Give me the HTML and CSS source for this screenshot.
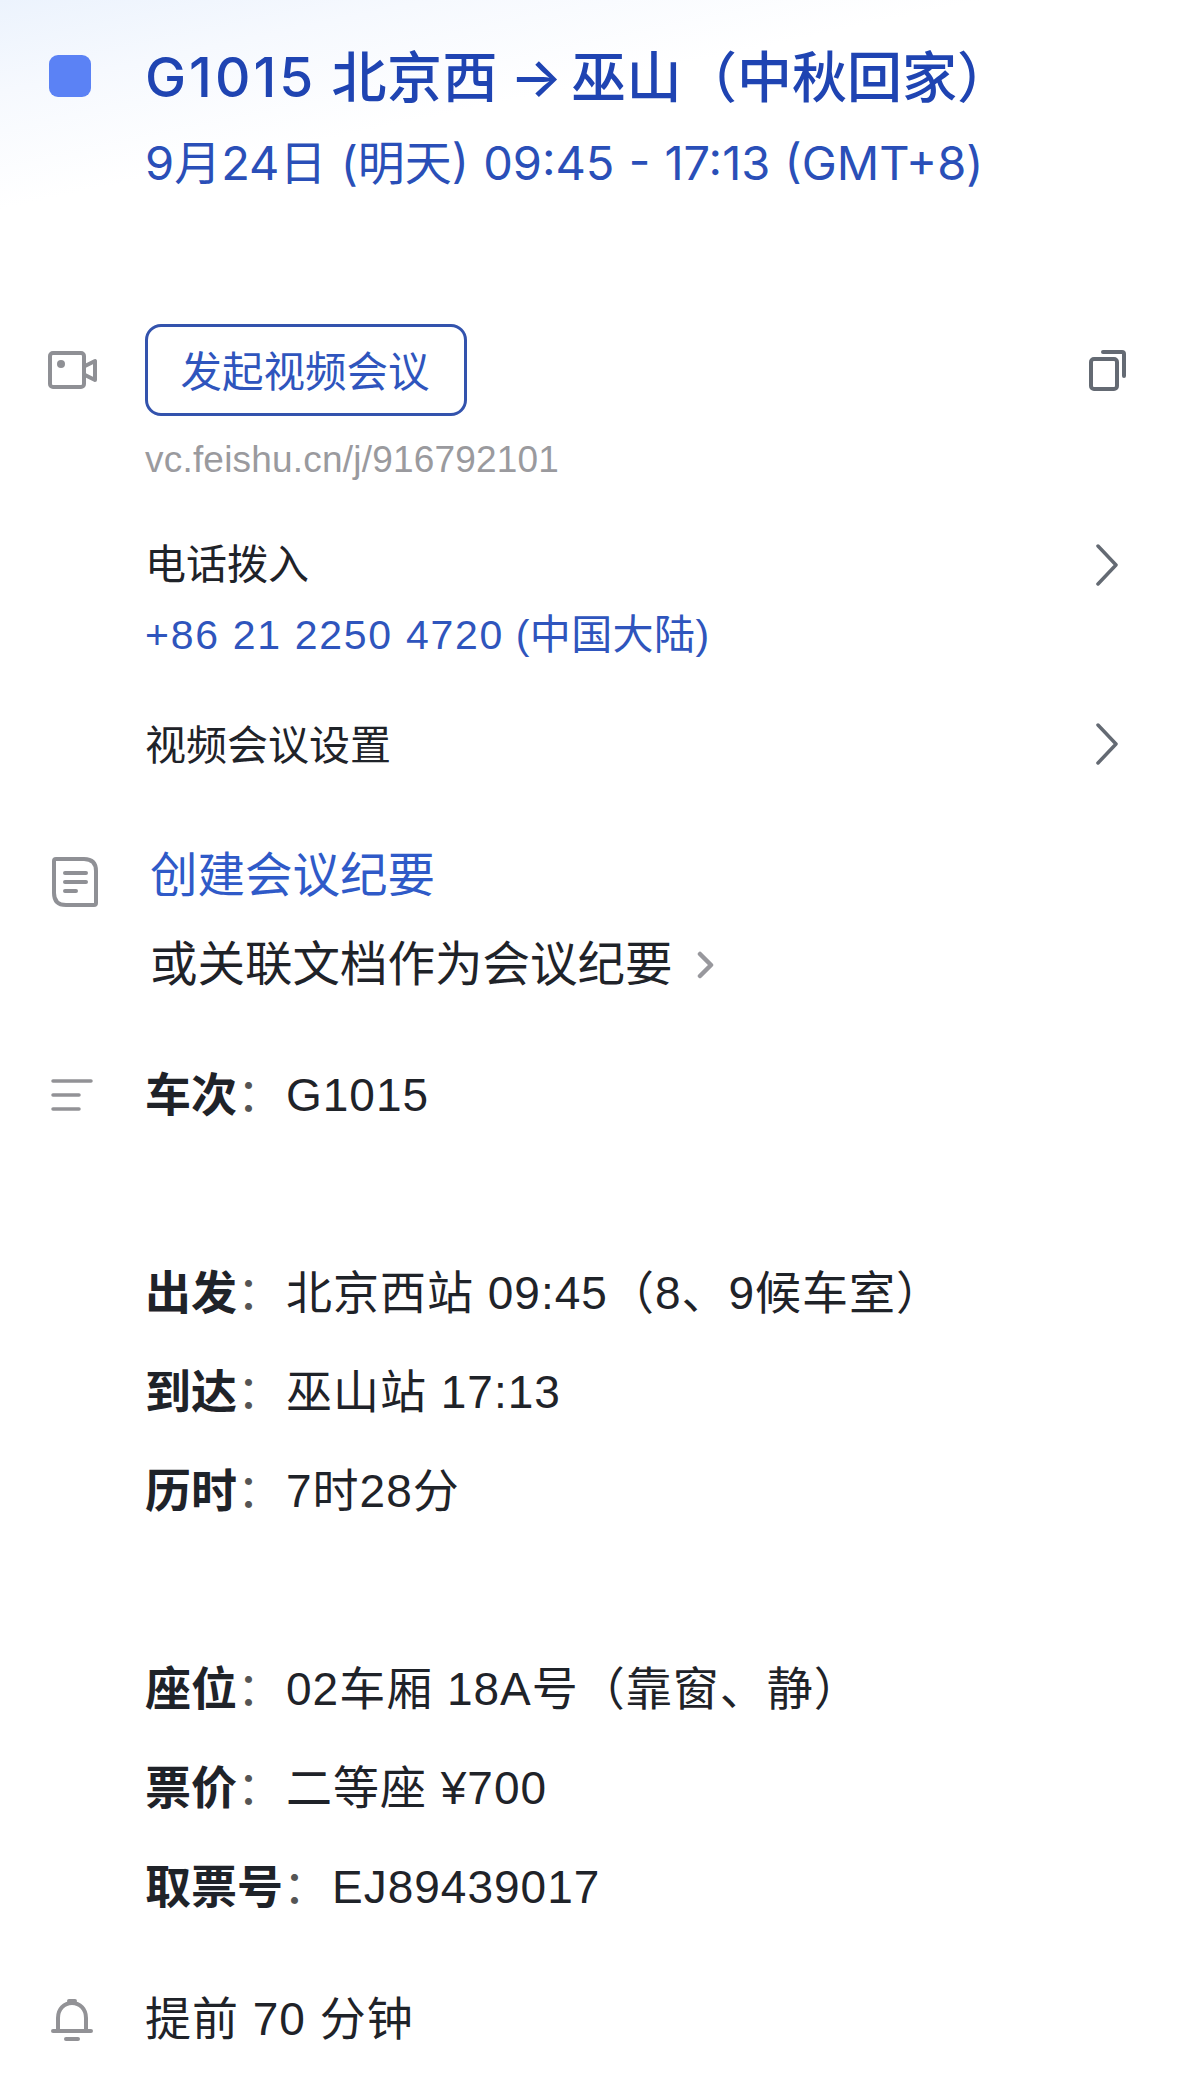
FILE: index.html
```html
<!DOCTYPE html>
<html lang="zh-CN">
  <head>
    <meta charset="UTF-8" />
    <meta name="viewport" content="width=device-width, initial-scale=1.0" />
    <title>G1015 北京西 → 巫山</title>
    <link rel="stylesheet" href="styles.css">
  </head>
  <body>
    <header class="event-header">
      <span class="event-color"></span>
      <div>
        <h1 class="event-title"><span class="train-code">G1015</span> 北京西<span class="title-arrow">→</span>巫山<span class="title-note">（中秋回家）</span></h1>
        <p class="event-time">9月24日 (明天) 09:45 - 17:13 (GMT+8)</p>
      </div>
    </header>

    <section class="row vc-row">
      <svg class="icon icon-video" width="50" height="38" viewBox="0 0 50 38" fill="none" stroke="#8f9095" stroke-width="4" stroke-linejoin="round">
        <rect x="2" y="2" width="34" height="34" rx="3" />
        <circle cx="13" cy="13" r="4" fill="#8f9095" stroke="none" />
        <path d="M37 15 L47 10 V29 L37 24" />
      </svg>
      <button class="vc-button">发起视频会议</button>
      <svg class="icon-copy" width="38" height="42" viewBox="0 0 38 42" fill="none" stroke="#646a73" stroke-width="4" stroke-linecap="round" stroke-linejoin="round">
        <rect x="2" y="10" width="26" height="30" rx="3" />
        <path d="M14 3 H33 Q35 3 35 5 V27" />
      </svg>
    </section>
    <p class="row vc-link"><span></span>vc.feishu.cn/j/916792101</p>

    <a class="row dial">
      <span></span>
      <div>
        <p class="dial-label">电话拨入</p>
        <p class="dial-number"><span class="dial-digits">+86 21 2250 4720</span> (中国大陆)</p>
      </div>
      <svg class="chevron chevron-top" width="24" height="42" viewBox="0 0 24 42" fill="none" stroke="#646a73" stroke-width="3.5" stroke-linecap="round" stroke-linejoin="round">
        <path d="M3 2 L21 21 L3 40" />
      </svg>
    </a>

    <a class="row vc-settings">
      <span></span>
      <p>视频会议设置</p>
      <svg class="chevron chevron-mid" width="24" height="42" viewBox="0 0 24 42" fill="none" stroke="#646a73" stroke-width="3.5" stroke-linecap="round" stroke-linejoin="round">
        <path d="M3 2 L21 21 L3 40" />
      </svg>
    </a>

    <section class="row notes">
      <svg class="icon icon-doc" width="46" height="50" viewBox="0 0 46 50" fill="none" stroke="#8f9095" stroke-width="4" stroke-linecap="round" stroke-linejoin="round">
        <path d="M2 4 Q2 2 4 2 H32 Q44 2 44 14 V46 Q44 48 42 48 H14 Q2 48 2 36 Z" />
        <path d="M13 16 H34 M13 25 H34 M13 34 H24" />
      </svg>
      <div class="notes-body">
        <p class="notes-create">创建会议纪要</p>
        <p class="notes-link">或关联文档作为会议纪要
          <svg class="chevron-small" width="18" height="28" viewBox="0 0 18 28" fill="none" stroke="#98989d" stroke-width="4.5" stroke-linecap="round" stroke-linejoin="round">
            <path d="M3 3 L14 14 L3 25" />
          </svg>
        </p>
      </div>
    </section>

    <section class="row description">
      <svg class="icon icon-list" width="42" height="34" viewBox="0 0 42 34" fill="none" stroke="#929296" stroke-width="3.5" stroke-linecap="round">
        <path d="M2 3 H40 M2 17 H28 M2 31 H28" />
      </svg>
      <div>
        <p class="desc-line"><b>车次</b><span class="colon">：</span>G1015</p>
        <p class="desc-line"></p>
        <p class="desc-line"><b>出发</b><span class="colon">：</span>北京西站 09:45（8、9候车室）</p>
        <p class="desc-line"><b>到达</b><span class="colon">：</span>巫山站 17:13</p>
        <p class="desc-line"><b>历时</b><span class="colon">：</span>7时28分</p>
        <p class="desc-line"></p>
        <p class="desc-line"><b>座位</b><span class="colon">：</span>02车厢 18A号（靠窗、静）</p>
        <p class="desc-line"><b>票价</b><span class="colon">：</span>二等座 ¥700</p>
        <p class="desc-line"><b>取票号</b><span class="colon">：</span>EJ89439017</p>
      </div>
    </section>

    <section class="row reminder">
      <svg class="icon icon-bell" width="42" height="44" viewBox="0 0 42 44" fill="none" stroke="#929296" stroke-width="4" stroke-linecap="round">
        <path d="M2 33 H40 M7 33 V20 C7 11 13 5 21 5 C29 5 35 11 35 20 V33 M18 3 H24" />
        <path d="M15 41 H27" />
      </svg>
      <p>提前 70 分钟</p>
    </section>
  </body>
</html>
```

FILE: styles.css
```css
* {
  box-sizing: border-box;
}
html,
body {
  margin: 0;
  padding: 0;
}
body {
  width: 1179px;
  height: 2091px;
  overflow: hidden;
  background: #fff;
  color: #1f2329;
  font-family: "Liberation Sans", "Noto Sans CJK SC", sans-serif;
  font-size: 46px;
  letter-spacing: 1px;
}
p,
h1 {
  margin: 0;
  font-weight: 400;
}
.row {
  display: grid;
  grid-template-columns: 145px 1fr auto;
  padding-right: 60px;
}
.icon {
  margin-left: 48px;
}

/* header */
.event-header {
  display: grid;
  grid-template-columns: 145px 1fr;
  height: 324px;
  padding-top: 34px;
  background: linear-gradient(168deg, #ecf3fd 0, #f6f9fe 90px, #fff 205px);
}
.event-color {
  width: 42px;
  height: 42px;
  margin: 21px 0 0 49px;
  border-radius: 9px;
  background: #5b82f5;
}
.event-title {
  height: 86px;
  color: #1f44b2;
  font-family: Inter, "Noto Sans CJK SC", sans-serif;
  font-size: 55px;
  font-weight: 500;
  letter-spacing: 0.5px;
  line-height: 86px;
  white-space: nowrap;
}
.train-code {
  letter-spacing: 3px;
}
.title-arrow {
  margin: 0 8px 0 12px;
}
.title-note {
  letter-spacing: 0;
}
.event-time {
  color: #2a4fb8;
  font-family: Inter, "Noto Sans CJK SC", sans-serif;
  font-size: 47px;
  letter-spacing: 0;
  word-spacing: 1px;
  line-height: 86px;
  white-space: nowrap;
}

/* video meeting */
.vc-row {
  height: 92px;
  align-items: center;
}
.vc-button {
  width: 322px;
  height: 92px;
  padding: 0 2px 3px 0;
  border: 3px solid #3353ad;
  border-radius: 16px;
  background: #fff;
  color: #2f55bd;
  font-family: inherit;
  font-size: 41.5px;
  letter-spacing: 0;
}
.icon-copy {
  margin-right: -8px;
}
.vc-link {
  height: 86px;
  padding-top: 1px;
  color: #9a9a9e;
  font-size: 37px;
  letter-spacing: 0.2px;
  line-height: 86px;
}
.dial {
  height: 140px;
  margin-top: 28px;
  align-items: start;
  font-size: 41px;
  letter-spacing: 0;
}
.dial-label {
  line-height: 70px;
}
.dial-number {
  color: #2f55bd;
  letter-spacing: 0.4px;
  line-height: 70px;
}
.dial-digits {
  letter-spacing: 1.7px;
}
.chevron-top {
  margin-top: 14px;
}
.chevron-mid {
  margin-top: 3px;
}
.vc-settings {
  height: 70px;
  margin-top: 37px;
  align-items: center;
  font-size: 41px;
  letter-spacing: 0;
}

/* notes */
.notes {
  height: 176px;
  margin-top: 54px;
}
.icon-doc {
  margin: 26px 0 0 52px;
}
.notes-body {
  padding-left: 5px;
  font-size: 47.5px;
  letter-spacing: 0;
  line-height: 88px;
}
.notes-create {
  padding-top: 1px;
  color: #2f5ac8;
}
.notes-link {
  padding-top: 1px;
}
.chevron-small {
  margin-left: 11px;
  vertical-align: 2px;
}

/* description */
.description {
  margin-top: 39px;
}
.icon-list {
  margin: 32px 0 0 51px;
}
.desc-line {
  height: 99px;
  line-height: 99px;
  white-space: nowrap;
}
.desc-line b {
  font-weight: 700;
  letter-spacing: 0;
}
.colon {
  display: inline-block;
  width: 49px;
  color: #555;
}

/* reminder */
.reminder {
  height: 99px;
  margin-top: 33px;
  align-items: center;
  line-height: 99px;
}
.icon-bell {
  margin-left: 51px;
}
```
